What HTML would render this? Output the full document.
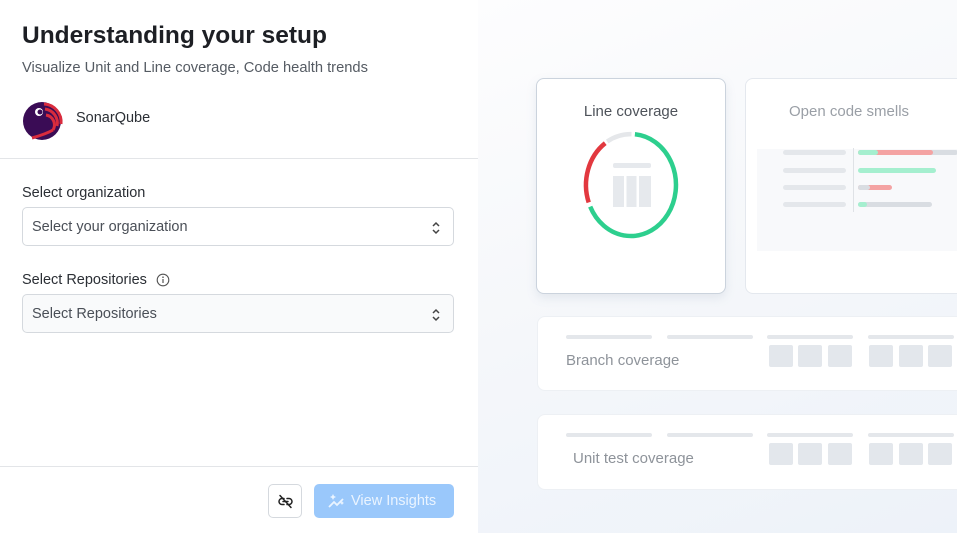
<!DOCTYPE html>
<html><head><style>
*{margin:0;padding:0;box-sizing:border-box}
body{width:957px;height:533px;overflow:hidden;font-family:"Liberation Sans",sans-serif;background:#fff;position:relative}
.left{position:absolute;left:0;top:0;width:478px;height:533px;background:#fff}
.right{position:absolute;left:478px;top:0;width:479px;height:533px;background:linear-gradient(160deg,#fdfdfe 0%,#f5f7fa 50%,#edf2f9 100%)}
.abs{position:absolute}
h1{position:absolute;left:22px;top:22px;font-size:24.5px;font-weight:bold;color:#1d1f24}
.sub{left:22px;top:60px;font-size:14.7px;color:#555b63}
.lbl{font-size:14.5px;color:#2b2f35}
.sel{position:absolute;left:22px;width:432px;height:39px;border:1px solid #d5d9de;border-radius:5px;font-size:14.5px;color:#4a4f57;padding:11px 0 0 9px}
.sel svg{position:absolute;right:12px;top:12px}
.card{position:absolute;background:#fff;border-radius:8px}
.bar{position:absolute;background:#e4e7eb;border-radius:3px;height:5px}
.sq{position:absolute;background:#e3e7ec;width:24px;height:22px;border-radius:2px}
</style></head><body>
<div class="left">
<h1>Understanding your setup</h1>
<div class="abs sub">Visualize Unit and Line coverage, Code health trends</div>
<svg class="abs" style="left:22px;top:100px" width="44" height="42" viewBox="0 0 44 42">
<circle cx="20" cy="21" r="19" fill="#3a0c55"/>
<path d="M22 4 A18 18 0 0 1 39 24" stroke="#d92b3d" stroke-width="3" fill="none"/>
<path d="M23 9 A14 14 0 0 1 35 26" stroke="#d92b3d" stroke-width="3" fill="none"/>
<path d="M24 15 A10 10 0 0 1 31 30" stroke="#d92b3d" stroke-width="3" fill="none"/>
<path d="M10 38 Q24 34 31 30" stroke="#d92b3d" stroke-width="3" fill="none"/>
<circle cx="17" cy="12" r="4" fill="#fff"/><circle cx="18" cy="12" r="2.5" fill="#3a0c55"/>
</svg>
<div class="abs" style="left:76px;top:110px;font-size:14.5px;color:#2b2f35">SonarQube</div>
<div class="abs" style="left:0;top:158px;width:478px;height:1px;background:#e3e5e8"></div>
<div class="abs lbl" style="left:22px;top:185px">Select organization</div>
<div class="sel" style="top:207px">Select your organization<svg width="10" height="16" viewBox="0 0 10 16"><path d="M2 6l3-3 3 3M2 10l3 3 3-3" stroke="#444" stroke-width="1.5" fill="none"/></svg></div>
<div class="abs lbl" style="left:22px;top:272px">Select Repositories</div>
<svg class="abs" style="left:156px;top:273px" width="14" height="14" viewBox="0 0 14 14"><circle cx="7" cy="7" r="5.8" stroke="#555" stroke-width="1.1" fill="none"/><path d="M7 6v4" stroke="#555" stroke-width="1.2"/><circle cx="7" cy="4.2" r=".8" fill="#555"/></svg>
<div class="sel" style="top:294px;background:#f9fafb">Select Repositories<svg width="10" height="16" viewBox="0 0 10 16"><path d="M2 6l3-3 3 3M2 10l3 3 3-3" stroke="#444" stroke-width="1.5" fill="none"/></svg></div>
<div class="abs" style="left:0;top:466px;width:478px;height:1px;background:#e3e5e8"></div>
<div class="abs" style="left:268px;top:484px;width:34px;height:34px;border:1px solid #d5d9de;border-radius:5px">
<svg style="position:absolute;left:8px;top:8px" width="17" height="17" viewBox="0 0 17 17"><path d="M7 5.5H5a3 3 0 0 0 0 6h2M10 5.5h2a3 3 0 0 1 0 6h-2M6 8.5h5" stroke="#222" stroke-width="1.5" fill="none" stroke-linecap="round"/><path d="M3 2.5l11 12" stroke="#222" stroke-width="1.5" stroke-linecap="round"/></svg></div>
<div class="abs" style="left:314px;top:484px;width:140px;height:34px;background:#9ac8fb;border-radius:5px;color:#eaf4ff;font-size:14.5px;padding:9px 0 0 37px">View Insights</div>
<svg class="abs" style="left:327px;top:492px" width="20" height="18" viewBox="0 0 20 18"><path d="M2 15l5-5 3 3 6-6" stroke="#eaf4ff" stroke-width="1.8" fill="none"/><path d="M6 2l1 2 2 1-2 1-1 2-1-2-2-1 2-1z M15 9l.7 1.3 1.3.7-1.3.7L15 13l-.7-1.3-1.3-.7 1.3-.7z" fill="#eaf4ff"/></svg>
</div>
<div class="right">
<div class="card" style="left:58px;top:78px;width:190px;height:216px;border:1px solid #cbd3dd;box-shadow:0 4px 10px rgba(120,140,170,.15)">
<div class="abs" style="left:0;width:188px;top:24px;text-align:center;font-size:15px;color:#4e535a">Line coverage</div>
</div>
<svg class="abs" style="left:0;top:0" width="479" height="533">
<path d="M 156.9 134.2 A 45 51 0 1 1 112.2 206.6" stroke="#2dcf8e" stroke-width="4.5" fill="none"/>
<path d="M 110.7 202.4 A 45 51 0 0 1 127.2 143.2" stroke="#e2383f" stroke-width="4.5" fill="none"/>
<path d="M 129.2 141.5 A 45 51 0 0 1 153.5 134.1" stroke="#e5e7ea" stroke-width="4.5" fill="none"/>
<rect x="135" y="163" width="38" height="5" rx="2" fill="#e6e9ed"/>
<rect x="135" y="176" width="11" height="31" fill="#e6e9ed"/><rect x="148.5" y="176" width="10" height="31" fill="#e6e9ed"/><rect x="161" y="176" width="12" height="31" fill="#e6e9ed"/>
</svg>
<div class="card" style="left:267px;top:78px;width:230px;height:216px;border:1px solid #e4e8ee">
<div class="abs" style="left:43px;top:24px;font-size:15px;color:#9a9fa6">Open code smells</div>
<div class="abs" style="left:11px;top:70px;width:220px;height:102px;background:#f8f9fb"></div>
</div>
<div class="bar" style="left:305px;top:150px;width:63px"></div>
<div class="bar" style="left:305px;top:168px;width:63px"></div>
<div class="bar" style="left:305px;top:185px;width:63px"></div>
<div class="bar" style="left:305px;top:202px;width:63px"></div>
<div class="abs" style="left:375px;top:148px;width:1px;height:64px;background:#dfe2e6"></div>
<div class="bar" style="left:380px;top:150px;width:100px;background:#d9dde2"></div>
<div class="bar" style="left:380px;top:150px;width:75px;background:#f4a3a3"></div>
<div class="bar" style="left:380px;top:150px;width:20px;background:#a5efcf"></div>
<div class="bar" style="left:380px;top:168px;width:78px;background:#a5efcf"></div>
<div class="bar" style="left:380px;top:185px;width:34px;background:#f4a3a3"></div>
<div class="bar" style="left:380px;top:185px;width:12px;background:#d9dde2"></div>
<div class="bar" style="left:380px;top:202px;width:74px;background:#d9dde2"></div>
<div class="bar" style="left:380px;top:202px;width:9px;background:#a5efcf"></div>
<div class="card" style="left:59px;top:316px;width:430px;height:75px;border:1px solid #edf0f4">
<div class="abs" style="left:28px;top:35px;font-size:15px;color:#8e939a">Branch coverage</div></div>
<div class="card" style="left:59px;top:414px;width:430px;height:76px;border:1px solid #edf0f4">
<div class="abs" style="left:35px;top:35px;font-size:15px;color:#8e939a">Unit test coverage</div></div>
<div class="bar" style="left:88px;top:335px;width:86px;height:4px"></div><div class="bar" style="left:189px;top:335px;width:86px;height:4px"></div><div class="bar" style="left:289px;top:335px;width:86px;height:4px"></div><div class="bar" style="left:390px;top:335px;width:86px;height:4px"></div>
<div class="sq" style="left:291px;top:345px"></div><div class="sq" style="left:320px;top:345px"></div><div class="sq" style="left:350px;top:345px"></div><div class="sq" style="left:391px;top:345px"></div><div class="sq" style="left:421px;top:345px"></div><div class="sq" style="left:450px;top:345px"></div>
<div class="bar" style="left:88px;top:433px;width:86px;height:4px"></div><div class="bar" style="left:189px;top:433px;width:86px;height:4px"></div><div class="bar" style="left:289px;top:433px;width:86px;height:4px"></div><div class="bar" style="left:390px;top:433px;width:86px;height:4px"></div>
<div class="sq" style="left:291px;top:443px"></div><div class="sq" style="left:320px;top:443px"></div><div class="sq" style="left:350px;top:443px"></div><div class="sq" style="left:391px;top:443px"></div><div class="sq" style="left:421px;top:443px"></div><div class="sq" style="left:450px;top:443px"></div>
</div>
</body></html>
